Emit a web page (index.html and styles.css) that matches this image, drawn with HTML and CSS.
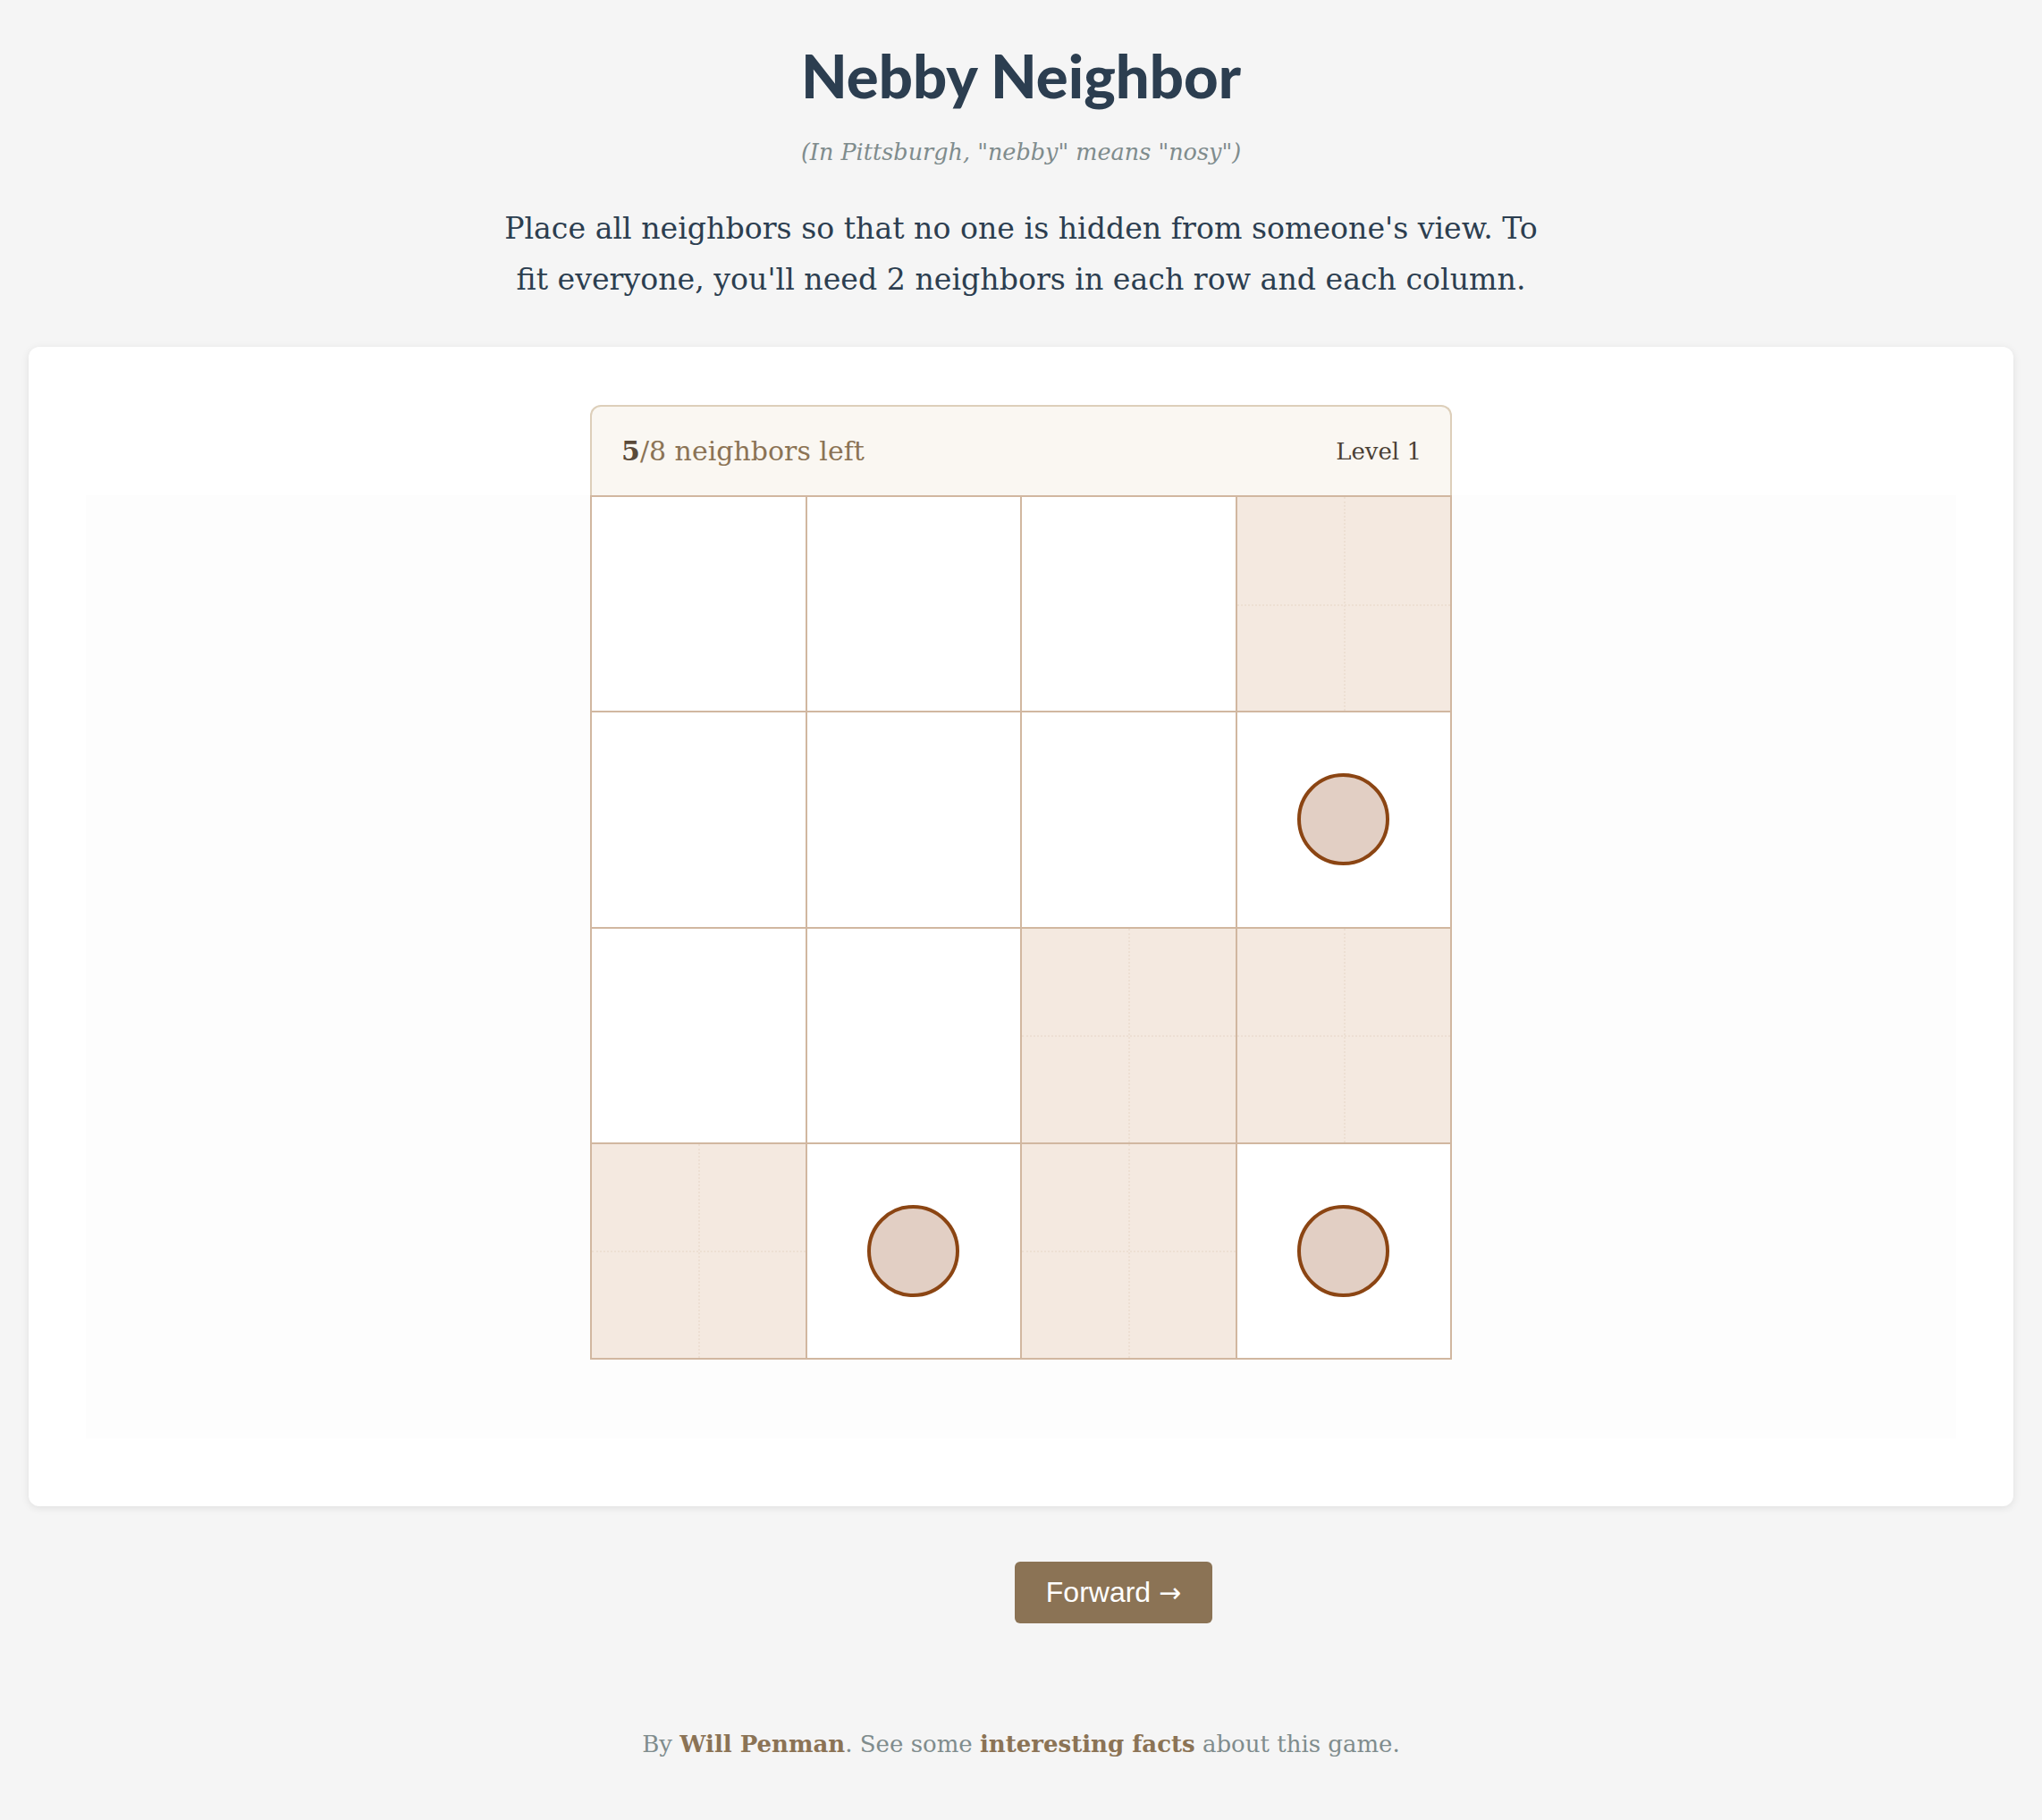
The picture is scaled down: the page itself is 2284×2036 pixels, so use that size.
FILE: index.html
```html
<!DOCTYPE html>
<html lang="en">
<head>
<meta charset="utf-8">
<title>Nebby Neighbor</title>
<link rel="stylesheet" href="styles.css">
</head>
<body>
  <header class="intro">
    <h1 class="title">Nebby Neighbor</h1>
    <p class="subtitle">(In Pittsburgh, "nebby" means "nosy")</p>
    <p class="instructions">Place all neighbors so that no one is hidden from someone's view. To fit everyone, you'll need 2 neighbors in each row and each column.</p>
  </header>

  <main class="card">
    <div class="board-header">
      <span class="count"><b>5</b>/8 neighbors left</span>
      <span class="level">Level 1</span>
    </div>
    <div class="board-area">
      <div class="grid">
        <div class="cell"></div>
        <div class="cell"></div>
        <div class="cell"></div>
        <div class="cell shaded"></div>

        <div class="cell"></div>
        <div class="cell"></div>
        <div class="cell"></div>
        <div class="cell"><span class="neighbor"></span></div>

        <div class="cell"></div>
        <div class="cell"></div>
        <div class="cell shaded"></div>
        <div class="cell shaded"></div>

        <div class="cell shaded"></div>
        <div class="cell"><span class="neighbor"></span></div>
        <div class="cell shaded"></div>
        <div class="cell"><span class="neighbor"></span></div>
      </div>
    </div>
  </main>

  <nav class="controls">
    <button class="btn btn-hidden" type="button">← Back</button>
    <button class="btn" type="button">Forward <span class="arrow">→</span></button>
  </nav>

  <footer class="footer">
    By <a href="#">Will Penman</a>. See some <a href="#">interesting facts</a> about this game.
  </footer>
</body>
</html>
```

FILE: styles.css
```css
* { box-sizing: border-box; }

body {
  margin: 0;
  background: #f5f5f5;
  font-family: "DejaVu Serif", "Liberation Serif", serif;
  color: #2c3e50;
}

.intro {
  text-align: center;
  padding-top: 44px;
}

.title {
  margin: 0;
  font-family: Lato, "Noto Sans", sans-serif;
  font-weight: 900;
  font-size: 67px;
  line-height: 80px;
  color: #2c3e50;
}

.subtitle {
  margin: 30px 0 0;
  font-style: italic;
  font-size: 25.5px;
  line-height: 32px;
  color: #7f8c8d;
}

.instructions {
  margin: 41px auto 0;
  width: 1180px;
  font-size: 33.2px;
  line-height: 57px;
  color: #2c3e50;
}

.card {
  display: block;
  margin: 47px 32px 0;
  background: #ffffff;
  border-radius: 12px;
  box-shadow: 0 2px 10px rgba(0, 0, 0, 0.09);
  padding: 65px 64px 76px;
}

.board-header {
  width: 964px;
  height: 101px;
  margin: 0 auto;
  display: flex;
  align-items: center;
  justify-content: space-between;
  padding: 0 32px 0 33px;
  background: #faf7f2;
  border: 2px solid #ddcfba;
  border-bottom: none;
  border-radius: 12px 12px 0 0;
}

.count {
  font-size: 30px;
  color: #8b7355;
}

.count b {
  color: #5a4a3a;
  font-weight: 700;
}

.level {
  font-size: 26px;
  color: #4a3f35;
}

.board-area {
  background: #fdfdfd;
  padding-bottom: 88px;
}

.grid {
  width: 964px;
  height: 967px;
  margin: 0 auto;
  display: grid;
  grid-template-columns: repeat(4, 1fr);
  grid-template-rows: repeat(4, 1fr);
  gap: 2px;
  background: #d1b7a0;
  border: 2px solid #d1b7a0;
}

.cell {
  position: relative;
  background: #ffffff;
  display: flex;
  align-items: center;
  justify-content: center;
}

.cell.shaded {
  background: #f4e9e0;
}

.cell.shaded::before {
  content: "";
  position: absolute;
  top: 0;
  bottom: 0;
  left: 50%;
  border-left: 2px dotted #eddfd3;
}

.cell.shaded::after {
  content: "";
  position: absolute;
  left: 0;
  right: 0;
  top: 50%;
  border-top: 2px dotted #eddfd3;
}

.neighbor {
  width: 103px;
  height: 103px;
  border-radius: 50%;
  background: #e2cfc4;
  border: 4px solid #8b4513;
}

.controls {
  display: flex;
  justify-content: center;
  gap: 17px;
  margin-top: 62px;
}

.btn {
  height: 69px;
  padding: 0 35px;
  border: none;
  border-radius: 6px;
  background: #8b7355;
  color: #ffffff;
  font-family: "Liberation Sans", Arial, sans-serif;
  font-size: 32px;
}

.btn .arrow {
  font-family: "DejaVu Sans", sans-serif;
  font-size: 30px;
}

.btn-hidden {
  visibility: hidden;
  width: 190px;
}

.footer {
  margin-top: 115px;
  text-align: center;
  font-size: 26px;
  line-height: 40px;
  color: #7f8c8d;
}

.footer a {
  color: #8b7355;
  font-weight: 700;
  text-decoration: none;
}
```
